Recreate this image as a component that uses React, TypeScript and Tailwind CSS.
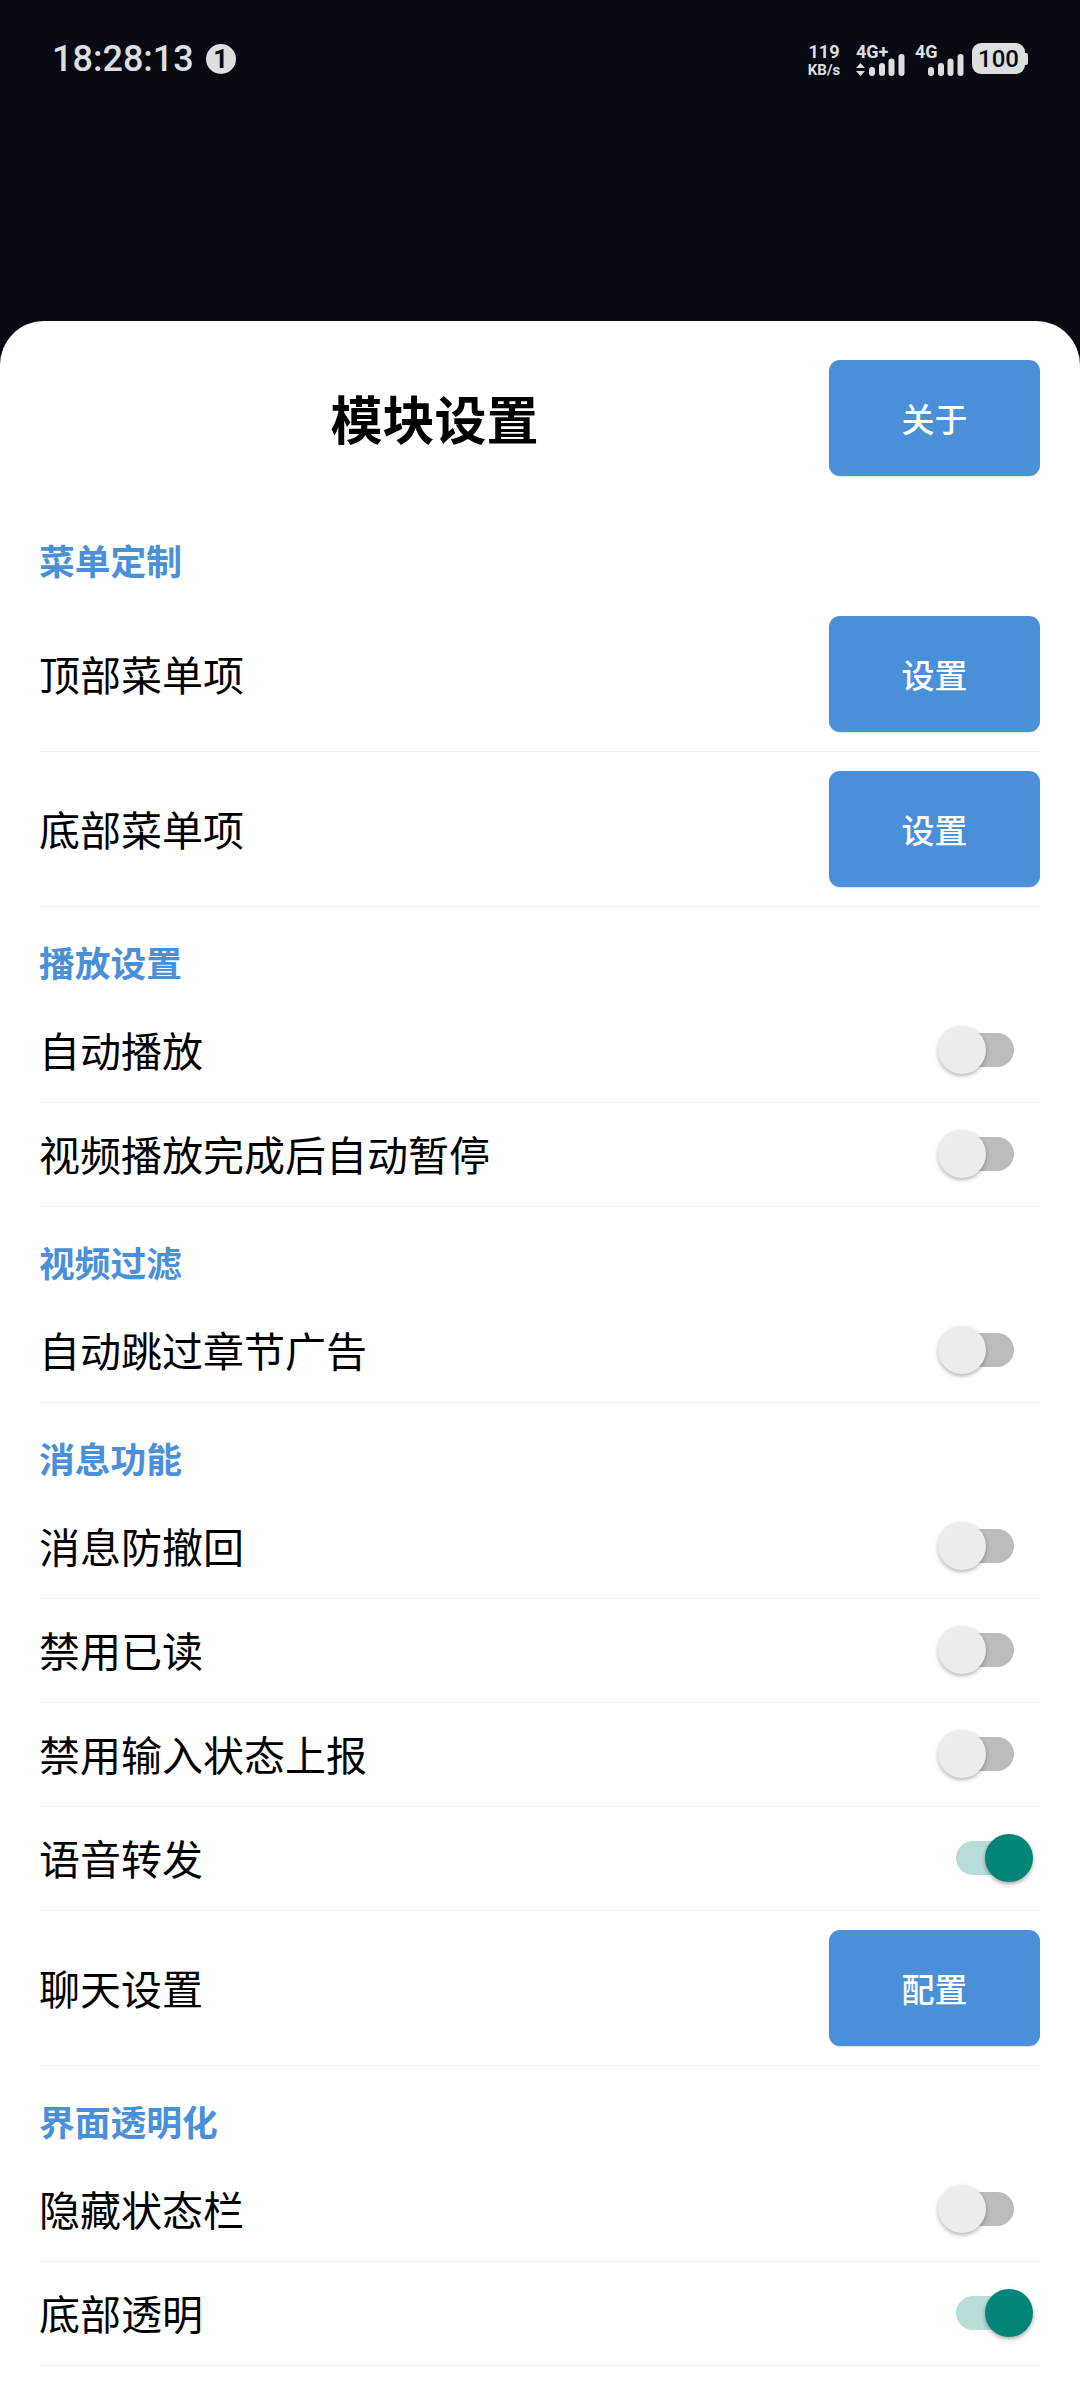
import React from 'react';

const FONT = "font-['Noto_Sans_CJK_SC','Noto_Sans',sans-serif]";

function SignalBars({ className }: { className?: string }) {
  return (
    <svg width="36" height="22" viewBox="0 0 36 22" className={className} fill="#dcdee0">
      <rect x="0" y="13" width="6" height="9" rx="3" />
      <rect x="10" y="9" width="6" height="13" rx="3" />
      <rect x="19.5" y="4.5" width="6" height="17.5" rx="3" />
      <rect x="29.5" y="0" width="6" height="22" rx="3" />
    </svg>
  );
}

function StatusBar() {
  return (
    <div className="h-[321px] bg-[#070a12] pl-[52px] pr-[54px] pt-[39px]">
      <div className="flex items-start justify-between">
        <div className="flex items-center h-[40px]">
          <span className="font-['Roboto'] font-medium text-[36px] leading-[40px] text-[#dcdee0]">18:28:13</span>
          <span className="ml-[12px] w-[30px] h-[30px] rounded-full bg-[#dcdee0] flex items-center justify-center font-['Roboto'] font-bold text-[26px] leading-none text-[#070a12]">
            1
          </span>
        </div>
        <div className="flex items-start text-[#dcdee0] font-['Roboto'] font-bold mt-[3px] mr-[-2px]">
          <div className="w-[34px] flex flex-col items-center">
            <span className="text-[18px] leading-[20px]">119</span>
            <span className="text-[15px] leading-[16px]">KB/s</span>
          </div>
          <div className="ml-[15px] w-[50px]">
            <span className="block text-[18px] leading-[20px]">4G+</span>
            <div className="flex items-end -mt-[8px]">
              <svg width="9" height="13" viewBox="0 0 9 13" fill="#dcdee0">
                <path d="M4.5 0 L9 5 H0 Z M0 8 H9 L4.5 13 Z" />
              </svg>
              <SignalBars className="ml-[4px]" />
            </div>
          </div>
          <div className="ml-[9px] w-[48px]">
            <span className="block text-[18px] leading-[20px]">4G</span>
            <SignalBars className="ml-[13px] -mt-[8px]" />
          </div>
          <div className="ml-[9px] mt-[1px] flex items-center">
            <div className="w-[53px] h-[31px] rounded-[9px] bg-[#dcdee0] flex items-center justify-center font-medium text-[#070a12] text-[24px] leading-none">
              100
            </div>
            <div className="w-[3px] h-[12px] rounded-r-[2px] bg-[#dcdee0]" />
          </div>
        </div>
      </div>
    </div>
  );
}

function BlueButton({ label }: { label: string }) {
  return (
    <button className="w-[211px] h-[116px] shrink-0 rounded-[11px] bg-[#4a90d9] text-white text-[33px] leading-none font-medium shadow-[0_1px_1px_rgba(0,0,0,0.12)]">
      {label}
    </button>
  );
}

function Toggle({ on }: { on: boolean }) {
  return (
    <div className="relative w-[58px] h-[34px] mr-[26px] mb-[2px] shrink-0">
      <div className={`w-full h-full rounded-full ${on ? 'bg-[#b8dcd8]' : 'bg-[#bcbcbc]'}`} />
      <div
        className={
          on
            ? 'absolute top-[-7px] right-[-19px] w-[48px] h-[48px] rounded-full bg-[#008577] shadow-[0_2px_4px_rgba(0,0,0,0.35)]'
            : 'absolute top-[-7px] left-[-18px] w-[48px] h-[48px] rounded-full bg-[#ececec] shadow-[0_2px_4px_rgba(0,0,0,0.3)]'
        }
      />
    </div>
  );
}

function SectionTitle({ title }: { title: string }) {
  return (
    <div className="h-[92px] pt-[29px] -ml-[1px] text-[35.75px] leading-[52px] font-bold text-[#4a90d9]">{title}</div>
  );
}

function ToggleRow({ label, on = false }: { label: string; on?: boolean }) {
  return (
    <div className="h-[104px] flex items-center justify-between border-b-[1.5px] border-[#eeeeee]">
      <span className="-ml-[1px] -mt-[4px] text-[41px] leading-[56px] text-black">{label}</span>
      <Toggle on={on} />
    </div>
  );
}

function ButtonRow({ label, action }: { label: string; action: string }) {
  return (
    <div className="h-[155px] flex items-center justify-between border-b-[1.5px] border-[#eeeeee]">
      <span className="-ml-[1px] -mt-[2px] text-[41px] leading-[56px] text-black">{label}</span>
      <BlueButton label={action} />
    </div>
  );
}

export default function App() {
  return (
    <div className={`w-[1080px] h-[2400px] overflow-hidden bg-[#070a12] ${FONT}`}>
      <StatusBar />
      <div className="h-[2079px] bg-white rounded-t-[44px] px-[40px] pt-[39px]">
        <div className="flex items-center h-[116px] mb-[29px]">
          <h1 className="flex-1 text-center text-[52px] leading-none font-bold text-black">模块设置</h1>
          <BlueButton label="关于" />
        </div>

        <SectionTitle title="菜单定制" />
        <ButtonRow label="顶部菜单项" action="设置" />
        <ButtonRow label="底部菜单项" action="设置" />

        <SectionTitle title="播放设置" />
        <ToggleRow label="自动播放" />
        <ToggleRow label="视频播放完成后自动暂停" />

        <SectionTitle title="视频过滤" />
        <ToggleRow label="自动跳过章节广告" />

        <SectionTitle title="消息功能" />
        <ToggleRow label="消息防撤回" />
        <ToggleRow label="禁用已读" />
        <ToggleRow label="禁用输入状态上报" />
        <ToggleRow label="语音转发" on />
        <ButtonRow label="聊天设置" action="配置" />

        <SectionTitle title="界面透明化" />
        <ToggleRow label="隐藏状态栏" />
        <ToggleRow label="底部透明" on />
      </div>
    </div>
  );
}
